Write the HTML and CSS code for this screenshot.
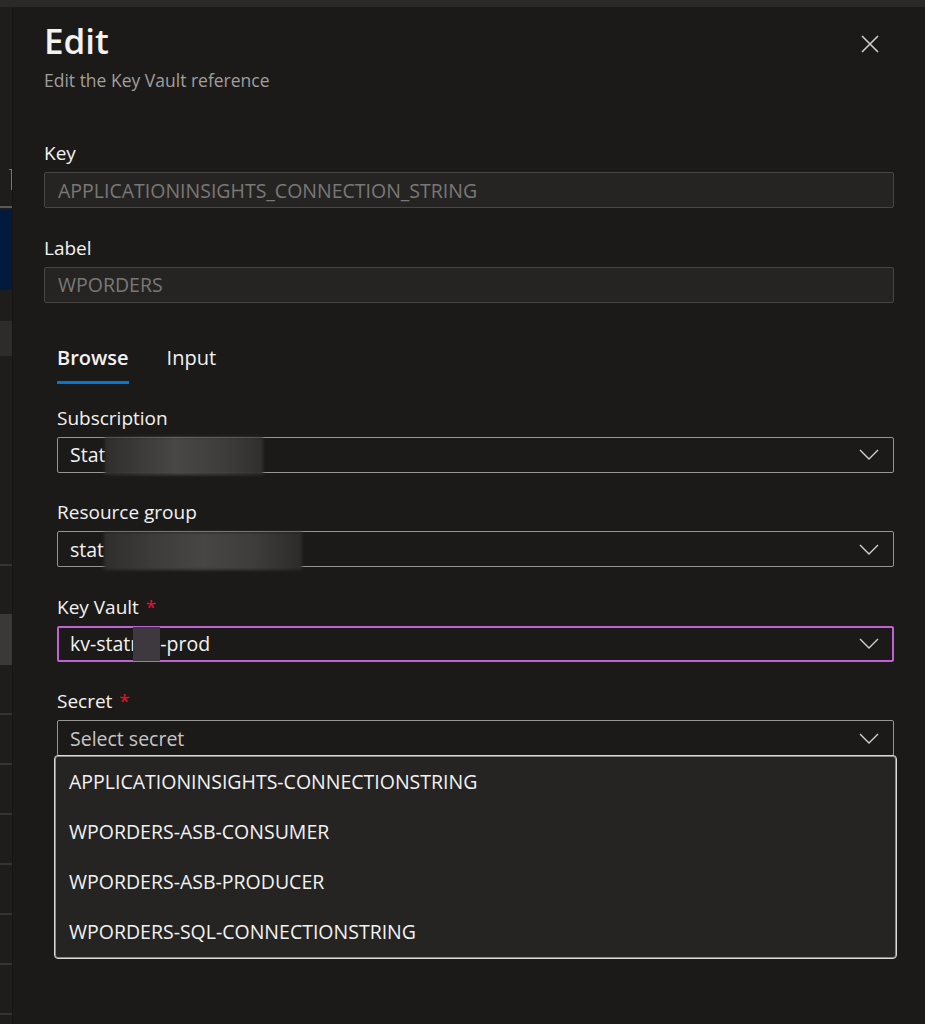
FILE: index.html
```html
<!DOCTYPE html>
<html lang="en">
<head>
  <meta charset="UTF-8" />
  <title>Edit - Key Vault reference</title>
  <meta name="viewport" content="width=device-width, initial-scale=1.0" />
  <link rel="stylesheet" href="styles.css">
</head>
<body>
  <div class="topbar"></div>
  <div class="shell">
    <div class="rail">
      <div class="rail-edge"></div>
      <div class="rail-line first"></div>
      <div class="rail-selected"></div>
      <div class="rail-block"></div>
      <div class="rail-line gap-lg"></div>
      <div class="rail-block tall"></div>
      <div class="rail-line"></div>
      <div class="rail-line"></div>
      <div class="rail-line"></div>
      <div class="rail-line"></div>
      <div class="rail-line"></div>
      <div class="rail-line"></div>
      <div class="rail-line"></div>
    </div>

    <div class="panel">
      <div class="header">
        <div>
          <h1>Edit</h1>
          <p class="subtitle">Edit the Key Vault reference</p>
        </div>
        <svg class="close" viewBox="0 0 18 18">
          <path d="M1 1 L17 17 M17 1 L1 17" />
        </svg>
      </div>

      <div class="field first">
        <label>Key</label>
        <div class="input disabled">APPLICATIONINSIGHTS_CONNECTION_STRING</div>
      </div>
      <div class="field">
        <label>Label</label>
        <div class="input disabled">WPORDERS</div>
      </div>

      <div class="tabs">
        <div class="tab active">Browse</div>
        <div class="tab">Input</div>
      </div>

      <div class="browse">
        <div class="field first">
          <label>Subscription</label>
          <div class="input select">
            <span class="value">Stat<span class="redact wide"></span></span>
            <svg class="chevron" viewBox="0 0 20 11"><path d="M1 1 L10 10 L19 1" /></svg>
          </div>
        </div>
        <div class="field">
          <label>Resource group</label>
          <div class="input select">
            <span class="value">stat<span class="redact wider"></span></span>
            <svg class="chevron" viewBox="0 0 20 11"><path d="M1 1 L10 10 L19 1" /></svg>
          </div>
        </div>
        <div class="field">
          <label>Key Vault <span class="req">*</span></label>
          <div class="input select focused">
            <span class="value">kv-statr<span class="redact small"></span>-prod</span>
            <svg class="chevron" viewBox="0 0 20 11"><path d="M1 1 L10 10 L19 1" /></svg>
          </div>
        </div>
        <div class="field secret">
          <label>Secret <span class="req">*</span></label>
          <div class="input select">
            <span class="value placeholder">Select secret</span>
            <svg class="chevron" viewBox="0 0 20 11"><path d="M1 1 L10 10 L19 1" /></svg>
          </div>
          <div class="menu">
            <div class="option">APPLICATIONINSIGHTS-CONNECTIONSTRING</div>
            <div class="option">WPORDERS-ASB-CONSUMER</div>
            <div class="option">WPORDERS-ASB-PRODUCER</div>
            <div class="option">WPORDERS-SQL-CONNECTIONSTRING</div>
          </div>
        </div>
      </div>
    </div>
  </div>
</body>
</html>
```

FILE: styles.css
```css
body {
  margin: 0;
  background: #1b1a19;
  color: #f3f2f1;
  font-family: "Open Sans", "Noto Sans", sans-serif;
}
.topbar {
  height: 7px;
  background: #2b2a29;
}
.shell {
  display: flex;
  min-height: 1017px;
}

/* page behind the blade */
.rail {
  width: 12px;
  flex: none;
  background: #1e1d1c;
  border-right: 1px solid #161514;
  display: flex;
  flex-direction: column;
}
.rail-edge {
  margin: 162px 0 0 auto;
  width: 2px;
  height: 20px;
  border-top: 1px solid #7a7876;
  border-right: 1px solid #7a7876;
}
.rail-line {
  height: 2px;
  margin-top: 48px;
  background: #353433;
}
.rail-line.first {
  margin-top: 16px;
  background: #5a5958;
}
.rail-line.gap-lg {
  margin-top: 208px;
}
.rail-selected {
  height: 80px;
  margin-top: 2px;
  background: #021a3d;
}
.rail-block {
  height: 35px;
  margin-top: 31px;
  background: #2d2c2b;
}
.rail-block.tall {
  height: 51px;
  margin-top: 48px;
  background: #3a3938;
}

/* blade */
.panel {
  flex: 1;
  padding: 0 31px;
}
.header {
  display: flex;
  justify-content: space-between;
  align-items: flex-start;
  padding-top: 12px;
}
h1 {
  margin: 0;
  font-size: 35px;
  line-height: 44px;
  font-weight: 600;
}
.subtitle {
  margin: 6px 0 0;
  font-size: 17.5px;
  line-height: 22px;
  color: #a19f9d;
}
.close {
  width: 18px;
  height: 18px;
  margin: 16px 15px 0 0;
  fill: none;
  stroke: #d2d0ce;
  stroke-width: 1.6;
}

.field {
  margin-top: 27.5px;
}
.field.first {
  margin-top: 50px;
}
.field label {
  display: block;
  font-size: 19px;
  line-height: 24px;
  margin-bottom: 7px;
}
.req {
  color: #e8112d;
  margin-left: 2px;
}
.input {
  box-sizing: border-box;
  height: 36px;
  border: 1px solid #979593;
  border-radius: 2px;
  padding: 0 14px 0 12px;
  display: flex;
  align-items: center;
  font-size: 19.5px;
  white-space: nowrap;
}
.input.disabled {
  background: #252423;
  border-color: #484644;
  color: #7a7876;
  padding-left: 13px;
}
.select {
  justify-content: space-between;
}
.select.focused {
  border: 2px solid #c062d4;
  padding: 0 13px 0 11px;
}
.value {
  display: flex;
  align-items: center;
}
.placeholder {
  color: #c8c6c4;
}
.chevron {
  width: 20px;
  height: 11px;
  fill: none;
  stroke: #d2d0ce;
  stroke-width: 1.4;
}

.redact {
  display: inline-block;
  height: 38px;
  margin-top: 3px;
  filter: blur(1.5px);
}
.redact.wide {
  width: 158px;
  background: linear-gradient(90deg, #2f2e2d, #3d3c3b 25%, #484746 45%, #3e3d3c 75%, #302f2e);
}
.redact.wider {
  width: 198px;
  background: linear-gradient(90deg, #2f2e2d, #3d3c3b 25%, #474645 50%, #3e3d3c 75%, #2c2b2a);
}
.redact.small {
  width: 27px;
  height: 34px;
  margin: 0 0 0 -5px;
  background: #3d393f;
  filter: blur(0.6px);
}

/* tabs */
.tabs {
  display: flex;
  gap: 38px;
  margin: 43px 0 0 13px;
}
.tab {
  font-size: 20px;
  line-height: 24px;
  padding-bottom: 11px;
  border-bottom: 3px solid transparent;
}
.tab.active {
  font-weight: 600;
  border-bottom-color: #0078d4;
}
.browse {
  padding-left: 13px;
}
.browse .field.first {
  margin-top: 22px;
}

/* secret list */
.secret {
  position: relative;
}
.menu {
  position: absolute;
  top: calc(100% - 1.5px);
  left: -3px;
  right: -3px;
  padding: 1px;
  background: #252423;
  border: 1px solid #dcdad8;
  border-radius: 4px;
  box-shadow: inset 0 0 0 1px #8a8886;
}
.option {
  height: 50px;
  line-height: 50px;
  padding-left: 13px;
  font-size: 19.5px;
}
```
